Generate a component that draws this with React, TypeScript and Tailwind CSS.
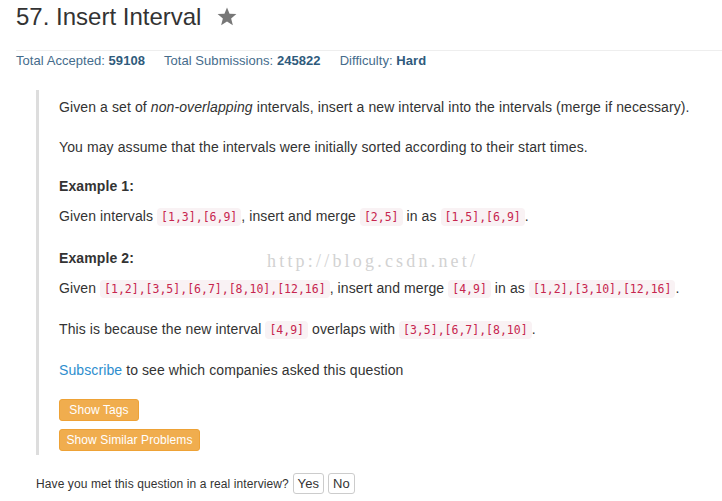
const Code = ({ children }: { children: string }) => (
  <code className="font-['DejaVu_Sans_Mono',monospace] text-[11.5px] leading-[14px] tracking-normal text-[#c7254e] bg-[#f9f2f4] rounded-[4px] px-[4px] py-[2px]">
    {children}
  </code>
);

export default function App() {
  return (
    <div className="relative w-[722px] min-h-[501px] bg-white text-[#333] font-['Liberation_Sans',Arial,sans-serif] overflow-hidden">
      {/* Title */}
      <div className="pl-4 pt-[2px] flex items-start">
        <h1 className="text-[24px] leading-[30px] font-normal">57. Insert Interval</h1>
        <svg className="ml-4 mt-[5px]" width="20" height="19" viewBox="0 0 24 23">
          <polygon
            fill="#777"
            points="12,0.5 15.1,8.1 23.4,8.6 17,13.9 19.1,22 12,17.5 4.9,22 7,13.9 0.6,8.6 8.9,8.1"
          />
        </svg>
      </div>

      <div className="ml-4 mt-[18px] border-t border-[#eee]" />

      {/* Stats */}
      <div className="pl-4 pt-[1px] flex gap-[19px] text-[13px] leading-[18px] tracking-[0.05px] text-[#456c8c]">
        <span>
          Total Accepted: <b className="text-[#2f5b7c]">59108</b>
        </span>
        <span>
          Total Submissions: <b className="text-[#2f5b7c]">245822</b>
        </span>
        <span>
          Difficulty: <b className="text-[#2f5b7c]">Hard</b>
        </span>
      </div>

      {/* Question body */}
      <div className="ml-[36px] mt-[20px] border-l-[3px] border-[#ddd] pl-[20px] pt-[2px] pb-[4px] text-[14px] leading-[30px] tracking-[0.1px]">
        <p>
          Given a set of <i>non-overlapping</i> intervals, insert a new interval into the intervals (merge if necessary).
        </p>
        <p className="mt-[10px]">You may assume that the intervals were initially sorted according to their start times.</p>
        <p className="mt-[9px] font-bold">Example 1:</p>
        <p>
          Given intervals <Code>[1,3],[6,9]</Code>, insert and merge <Code>[2,5]</Code> in as <Code>[1,5],[6,9]</Code>.
        </p>
        <p className="mt-[12px] font-bold">Example 2:</p>
        <p>
          Given <Code>[1,2],[3,5],[6,7],[8,10],[12,16]</Code>, insert and merge <Code>[4,9]</Code> in as{' '}
          <Code>[1,2],[3,10],[12,16]</Code>.
        </p>
        <p className="mt-[11px]">
          This is because the new interval <Code>[4,9]</Code> overlaps with <Code>[3,5],[6,7],[8,10]</Code>.
        </p>
        <p className="mt-[11px]">
          <a className="text-[#2e8ece]">Subscribe</a> to see which companies asked this question
        </p>

        <div className="mt-[14px] flex flex-col items-start gap-[8px]">
          <button className="w-[80px] h-[22px] rounded-[3px] bg-[#f0ad4e] border border-[#eea236] text-white text-[12px] leading-[20px]">
            Show Tags
          </button>
          <button className="w-[141px] h-[22px] rounded-[3px] bg-[#f0ad4e] border border-[#eea236] text-white text-[12px] leading-[20px]">
            Show Similar Problems
          </button>
        </div>
      </div>

      {/* Interview question */}
      <div className="ml-[36px] mt-[18px] flex items-center text-[12px] tracking-[0.1px]">
        <span>Have you met this question in a real interview?</span>
        <button className="ml-[4px] w-[31px] h-[21px] border border-[#ccc] rounded-[3px] bg-white text-[13px] leading-[19px]">
          Yes
        </button>
        <button className="ml-[4px] w-[27px] h-[21px] border border-[#ccc] rounded-[3px] bg-white text-[13px] leading-[19px]">
          No
        </button>
      </div>

      {/* Watermark */}
      <div className="absolute left-[267px] top-[251px] font-['Liberation_Serif',serif] text-[18px] leading-[20px] tracking-[3.2px] text-[#d2d2d2] pointer-events-none">
        http://blog.csdn.net/
      </div>
    </div>
  );
}
